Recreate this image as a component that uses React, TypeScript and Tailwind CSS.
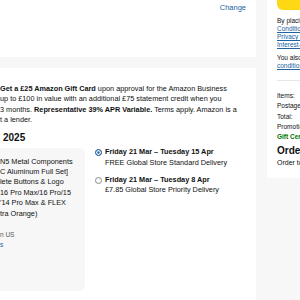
export default function App() {
  const font = { fontFamily: '"Liberation Sans", Arial, sans-serif' };

  return (
    <div
      className="w-[300px] h-[300px] overflow-hidden bg-[#f7f7f7] flex text-[#0f1111]"
      style={font}
    >
      {/* Left column */}
      <div className="w-[256px] shrink-0 flex flex-col gap-[11px]">
        {/* Address card */}
        <div className="h-[57px] bg-white flex justify-end pr-[10px] pt-[3px]">
          <a className="text-[7.5px] leading-[10px] text-[#2162a1]">Change</a>
        </div>

        {/* Delivery card */}
        <div className="flex-1 bg-white pt-[16px]">
          <div className="text-[7.3px] leading-[10.4px] whitespace-nowrap">
            <div>
              <span className="font-bold">Get a £25 Amazon Gift Card</span> upon approval for the Amazon Business
            </div>
            <div>up to £100 in value with an additional £75 statement credit when you</div>
            <div>
              3 months. <span className="font-bold">Representative 39% APR Variable.</span> Terms apply. Amazon is a
            </div>
            <div>t a lender.</div>
          </div>

          <h2 className="mt-[6px] text-[10px] leading-[12px] font-bold pl-[3px]">2025</h2>

          <div className="mt-[4.5px] flex">
            {/* Product */}
            <div className="w-[85px] h-[143px] shrink-0 bg-[#f7f7f7] rounded-r-[6px] pt-[8.5px] whitespace-nowrap overflow-hidden">
              <div className="text-[7.3px] leading-[10.4px]">
                <div>N5 Metal Components</div>
                <div>C Aluminum Full Set]</div>
                <div>lete Buttons &amp; Logo</div>
                <div>16 Pro Max/16 Pro/15</div>
                <div>'14 Pro Max &amp; FLEX</div>
                <div>tra Orange)</div>
              </div>
              <div className="mt-[11px] text-[6.5px] leading-[10px] text-[#565959]">n US</div>
              <div className="text-[6.5px] leading-[10px] text-[#2162a1]">s</div>
            </div>

            {/* Delivery options */}
            <div className="-mt-[1px] pl-[10px] flex flex-col gap-[7px] whitespace-nowrap">
              <label className="flex gap-[3px]">
                <span className="mt-[1.7px] w-[7px] h-[7px] rounded-full bg-[#2162a1] border-[1.5px] border-[#2162a1] shadow-[inset_0_0_0_1.2px_#fff] shrink-0" />
                <span className="text-[7.3px] leading-[10.4px]">
                  <span className="block font-bold">Friday 21 Mar – Tuesday 15 Apr</span>
                  <span className="block">FREE Global Store Standard Delivery</span>
                </span>
              </label>
              <label className="flex gap-[3px]">
                <span className="mt-[1.7px] w-[7px] h-[7px] rounded-full bg-white border border-[#888c8c] shrink-0" />
                <span className="text-[7.3px] leading-[10.4px]">
                  <span className="block font-bold">Friday 21 Mar – Tuesday 8 Apr</span>
                  <span className="block">£7.85 Global Store Priority Delivery</span>
                </span>
              </label>
            </div>
          </div>
        </div>
      </div>

      {/* Right column: order summary */}
      <div className="ml-[11px] w-[120px] shrink-0">
        <div className="h-[178px] bg-white pl-[10px] whitespace-nowrap">
          <div className="h-[10px] w-[80px] bg-[#ffd814] rounded-b-[6px]" />
          <div className="mt-[6.5px] text-[6.5px] leading-[8.3px]">
            <div>By placing your order, you agree to Amazon's</div>
            <div className="text-[#2162a1] underline">Conditions of Use &amp; Sale</div>
            <div className="text-[#2162a1] underline">Privacy Notice</div>
            <div className="text-[#2162a1] underline">Interest-Based Ads</div>
          </div>
          <div className="mt-[4px] text-[6.5px] leading-[8.3px]">
            <div>You also agree to the</div>
            <div className="text-[#2162a1] underline">conditions</div>
          </div>
          <div className="mt-[10px] mr-[10px] border-t border-[#e7e7e7]" />
          <div className="mt-[10px] text-[6.5px] leading-[10.2px]">
            <div>Items:</div>
            <div>Postage &amp; Packing:</div>
            <div>Total:</div>
            <div>Promotion applied:</div>
            <div className="text-[#007600] font-bold">Gift Certificate</div>
          </div>
          <div className="mt-[2px] text-[10px] leading-[13px] font-bold">Order Total:</div>
          <div className="mt-[1px] text-[7px] leading-[10px]">Order totals include VAT</div>
        </div>
      </div>
    </div>
  );
}
